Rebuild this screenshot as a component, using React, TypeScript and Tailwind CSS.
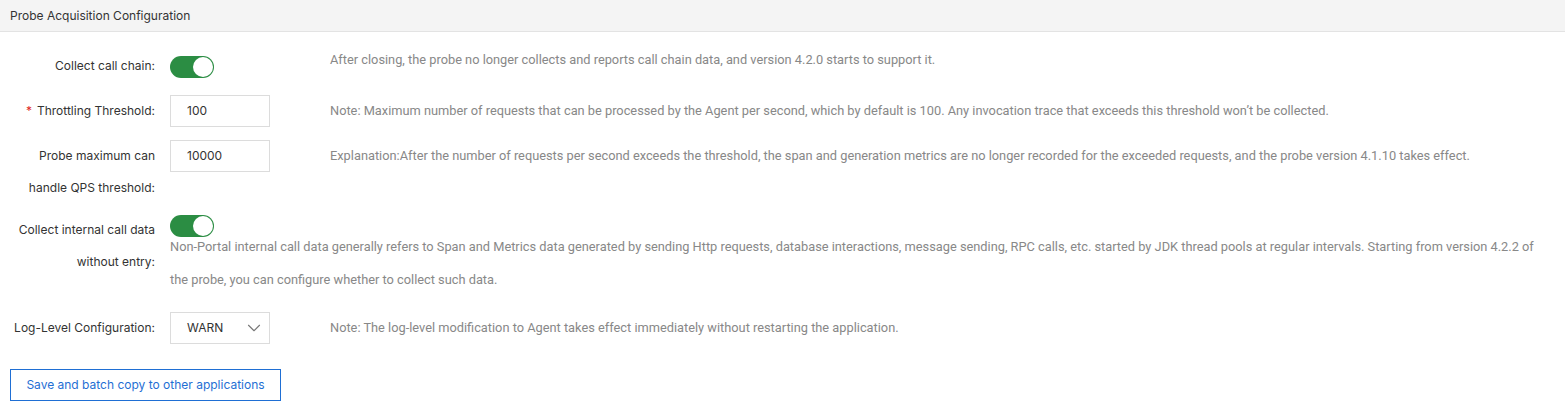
import { ChevronDown } from "lucide-react";
import type { ReactNode } from "react";

const labelFont = { fontFamily: "Inter, 'Noto Sans', sans-serif" };

function Toggle() {
  return (
    <div className="flex h-[22px] w-[44px] items-center justify-end rounded-full bg-[#2b8d43] p-[1px]">
      <div className="h-[20px] w-[20px] rounded-full bg-white" />
    </div>
  );
}

function Label({ children, required }: { children: ReactNode; required?: boolean }) {
  return (
    <div className="w-[155px] shrink-0 text-right text-[12px] leading-[32px] text-[#333]">
      {required ? <span className="mr-[5px] text-[#e0281f]">*</span> : null}
      {children}
    </div>
  );
}

function Hint({ children, className = "" }: { children: ReactNode; className?: string }) {
  return (
    <div
      className={`text-[12.8px] text-[#888] ${className}`}
      style={{ fontFamily: "Roboto, 'Liberation Sans', sans-serif" }}
    >
      {children}
    </div>
  );
}

function Field({ value }: { value: string }) {
  return (
    <div className="flex h-[32px] w-[100px] shrink-0 items-center border border-[#dcdcdc] bg-white pl-[16px] text-[12px] text-[#333]">
      {value}
    </div>
  );
}

export default function App() {
  return (
    <div className="min-h-[404px] w-full bg-white" style={labelFont}>
      <div className="flex h-[32px] items-center border-b border-[#e3e3e3] bg-[#f4f4f4] pl-[10px] text-[12px] text-[#333]">
        Probe Acquisition Configuration
      </div>

      <div className="mt-[18px] flex items-start">
        <Label>Collect call chain:</Label>
        <div className="ml-[15px] mt-[6px] w-[100px] shrink-0">
          <Toggle />
        </div>
        <Hint className="ml-[60px] leading-[20px]">
          After closing, the probe no longer collects and reports call chain data, and version 4.2.0 starts to support it.
        </Hint>
      </div>

      <div className="mt-[13px] flex items-start">
        <Label required>Throttling Threshold:</Label>
        <div className="ml-[15px]">
          <Field value="100" />
        </div>
        <Hint className="ml-[60px] leading-[32px]">
          Note: Maximum number of requests that can be processed by the Agent per second, which by default is 100. Any invocation trace that exceeds this threshold won’t be collected.
        </Hint>
      </div>

      <div className="mt-[13px] flex items-start">
        <Label>
          Probe maximum can
          <br />
          handle QPS threshold:
        </Label>
        <div className="ml-[15px]">
          <Field value="10000" />
        </div>
        <Hint className="ml-[60px] leading-[32px]">
          Explanation:After the number of requests per second exceeds the threshold, the span and generation metrics are no longer recorded for the exceeded requests, and the probe version 4.1.10 takes effect.
        </Hint>
      </div>

      <div className="mt-[10px] flex items-start">
        <Label>
          Collect internal call data
          <br />
          without entry:
        </Label>
        <div className="ml-[15px] flex min-w-0 flex-1 flex-col pr-[17px]">
          <div className="mt-[1px]">
            <Toggle />
          </div>
          <Hint className="-mt-[7px] leading-[33px]">
            Non-Portal internal call data generally refers to Span and Metrics data generated by sending Http requests, database interactions, message sending, RPC calls, etc. started by JDK thread pools at regular intervals. Starting from version 4.2.2 of the probe, you can configure whether to collect such data.
          </Hint>
        </div>
      </div>

      <div className="mt-[16px] flex items-start">
        <Label>Log-Level Configuration:</Label>
        <div className="ml-[15px] flex h-[32px] w-[100px] shrink-0 items-center justify-between border border-[#dcdcdc] pl-[16px] pr-[4px] text-[12px] text-[#333]">
          <span>WARN</span>
          <ChevronDown size={22} strokeWidth={1.2} className="text-[#777]" />
        </div>
        <Hint className="ml-[60px] leading-[32px]">
          Note: The log-level modification to Agent takes effect immediately without restarting the application.
        </Hint>
      </div>

      <div className="ml-[10px] mt-[25px] pb-[3px]">
        <button className="h-[32px] w-[271px] border border-[#1f6fd4] bg-white text-[12px] text-[#1f6fd4]">
          Save and batch copy to other applications
        </button>
      </div>
    </div>
  );
}
